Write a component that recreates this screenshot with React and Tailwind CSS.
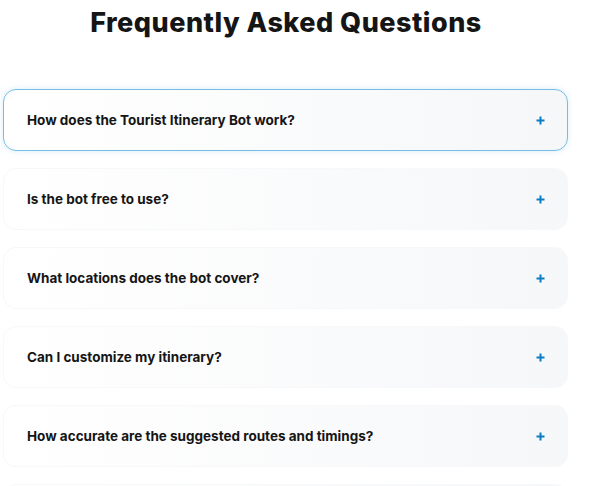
import { useState } from 'react'

const faqs = [
  'How does the Tourist Itinerary Bot work?',
  'Is the bot free to use?',
  'What locations does the bot cover?',
  'Can I customize my itinerary?',
  'How accurate are the suggested routes and timings?',
  'Does the bot work offline?',
]

function Plus() {
  return (
    <svg width="9" height="9" viewBox="0 0 9 9" className="shrink-0">
      <path d="M4.5 0.5v8M0.5 4.5h8" stroke="#0b7dc4" strokeWidth="2" />
    </svg>
  )
}

export default function App() {
  const [open, setOpen] = useState(0)

  return (
    <div className="bg-white min-h-screen font-['Inter',sans-serif] text-[#151515]">
      <h1 className="text-center text-[27px] font-extrabold tracking-[0.5px] leading-none pt-[9px] mr-[28px]">
        Frequently Asked Questions
      </h1>

      {/* accordion list */}
      <div className="ml-[3px] w-[565px] mt-[53px] flex flex-col gap-[17px]">
        {faqs.map((q, i) => (
          <button
            key={i}
            onClick={() => setOpen(i)}
            className={`h-[62px] rounded-[13px] flex items-center justify-between pl-[23px] pr-[22px] text-left bg-gradient-to-r from-white to-[#f6f7f9] ${
              i === open
                ? 'border border-[#74bde6] shadow-[0_0_6px_rgba(116,189,230,0.25)]'
                : 'border border-[#f7f8fa]'
            }`}
          >
            <span className="text-[13.5px] font-bold">{q}</span>
            <Plus />
          </button>
        ))}
      </div>
    </div>
  )
}
